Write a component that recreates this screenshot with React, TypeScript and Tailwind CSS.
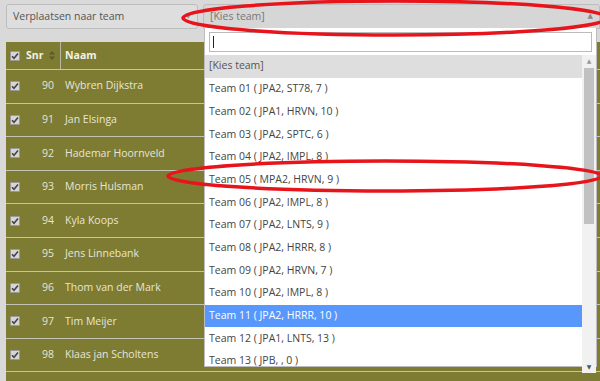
import React from 'react';

const players = [
  { nr: 90, name: 'Wybren Dijkstra' },
  { nr: 91, name: 'Jan Elsinga' },
  { nr: 92, name: 'Hademar Hoornveld' },
  { nr: 93, name: 'Morris Hulsman' },
  { nr: 94, name: 'Kyla Koops' },
  { nr: 95, name: 'Jens Linnebank' },
  { nr: 96, name: 'Thom van der Mark' },
  { nr: 97, name: 'Tim Meijer' },
  { nr: 98, name: 'Klaas jan Scholtens' },
];

const teams = [
  '[Kies team]',
  'Team 01 ( JPA2, ST78, 7 )',
  'Team 02 ( JPA1, HRVN, 10 )',
  'Team 03 ( JPA2, SPTC, 6 )',
  'Team 04 ( JPA2, IMPL, 8 )',
  'Team 05 ( MPA2, HRVN, 9 )',
  'Team 06 ( JPA2, IMPL, 8 )',
  'Team 07 ( JPA2, LNTS, 9 )',
  'Team 08 ( JPA2, HRRR, 8 )',
  'Team 09 ( JPA2, HRVN, 7 )',
  'Team 10 ( JPA2, IMPL, 8 )',
  'Team 11 ( JPA2, HRRR, 10 )',
  'Team 12 ( JPA1, LNTS, 13 )',
  'Team 13 ( JPB, , 0 )',
];

const Check = () => (
  <span className="w-[10px] h-[10px] bg-[#d6d6d6] border border-[#9a9a9a] rounded-[1px] flex items-center justify-center">
    <svg width="8" height="8" viewBox="0 0 8 8">
      <path d="M1 4.2 L3 6.2 L7 1.5" stroke="#444" strokeWidth="1.6" fill="none" />
    </svg>
  </span>
);

const App: React.FC = () => {
  return (
    <div
      className="relative w-[600px] h-[381px] overflow-hidden bg-[#d9d9d9] text-[10.5px]"
      style={{ fontFamily: '"Open Sans", "Noto Sans", "DejaVu Sans", sans-serif' }}
    >
      {/* Top selects */}
      <div className="flex gap-[5px] pl-[6px] pt-[4px]">
        <div className="w-[192px] h-[25px] border border-[#bdbdbd] rounded-[3px] bg-[#dedede] flex items-center justify-between px-[6px] text-[#555]">
          <span>Verplaatsen naar team</span>
          <span className="text-[7px] text-[#888]">▼</span>
        </div>
        <div className="flex-1 h-[25px] border border-[#bdbdbd] rounded-t-[3px] bg-[#d6d6d6] flex items-center justify-between pl-[6px] pr-[6px] text-[#777]">
          <span>[Kies team]</span>
          <span className="text-[7px] text-[#888]">▲</span>
        </div>
      </div>

      {/* Table */}
      <div className="ml-[6px] mt-[13px] h-[400px] bg-[#7e7b33] text-[#e6e6d6]">
        <div className="flex items-center h-[28px] border-b border-[#c4c4b4] font-bold text-[#f2f2e8]">
          <div className="w-[55px] h-full flex items-center pl-[4px] gap-[6px] border-r border-[#b8b8a0]">
            <Check />
            <span>Snr</span>
            <svg width="6" height="9" viewBox="0 0 6 9">
              <path d="M3 0 L6 3.5 L0 3.5 Z M3 9 L6 5.5 L0 5.5 Z" fill="#5a5a2a" />
            </svg>
          </div>
          <span className="pl-[4px]">Naam</span>
        </div>
        {players.map(p => (
          <div key={p.nr} className="flex items-center h-[33.6px] border-b border-[#c4c4b4]">
            <div className="w-[18px] pl-[4px]">
              <Check />
            </div>
            <span className="w-[30px] text-right">{p.nr}</span>
            <span className="pl-[11px]">{p.name}</span>
          </div>
        ))}
      </div>

      {/* Open dropdown */}
      <div className="absolute left-[204px] top-[28px] w-[393px] h-[339px] bg-white border border-[#bdbdbd] border-t-0 text-[#444]">
        <div className="px-[4px] pt-[4px] pb-[3px]">
          <div className="h-[20px] border border-[#bbb] flex items-center pl-[3px]">
            <span className="w-[1px] h-[12px] bg-[#222]" />
          </div>
        </div>
        <div className="flex">
          <div className="flex-1">
            {teams.map((t, i) => (
              <div
                key={t}
                className={`h-[22.7px] flex items-center pl-[4px] ${
                  i === 0 ? 'bg-[#dedede] text-[#555]' : i === 11 ? 'bg-[#5897fb] text-white' : ''
                }`}
              >
                {t}
              </div>
            ))}
          </div>
          <div className="w-[14px] bg-[#f1f1f1] flex flex-col items-center">
            <span className="text-[6px] text-[#999] h-[12px] leading-[12px]">▲</span>
            <div className="w-[10px] h-[156px] bg-[#c1c1c1] mt-[1px]" />
            <div className="flex-1" />
            <span className="text-[6px] text-[#555] h-[12px] leading-[12px]">▼</span>
          </div>
        </div>
      </div>

      {/* Red annotation ellipses */}
      <svg className="absolute left-0 top-0 pointer-events-none" width="600" height="381">
        <ellipse cx="395" cy="18" rx="212" ry="17" fill="none" stroke="#e8141c" strokeWidth="3.5" />
        <ellipse cx="385" cy="176" rx="217" ry="15" fill="none" stroke="#e8141c" strokeWidth="3.5" />
      </svg>
    </div>
  );
};

export default App;
